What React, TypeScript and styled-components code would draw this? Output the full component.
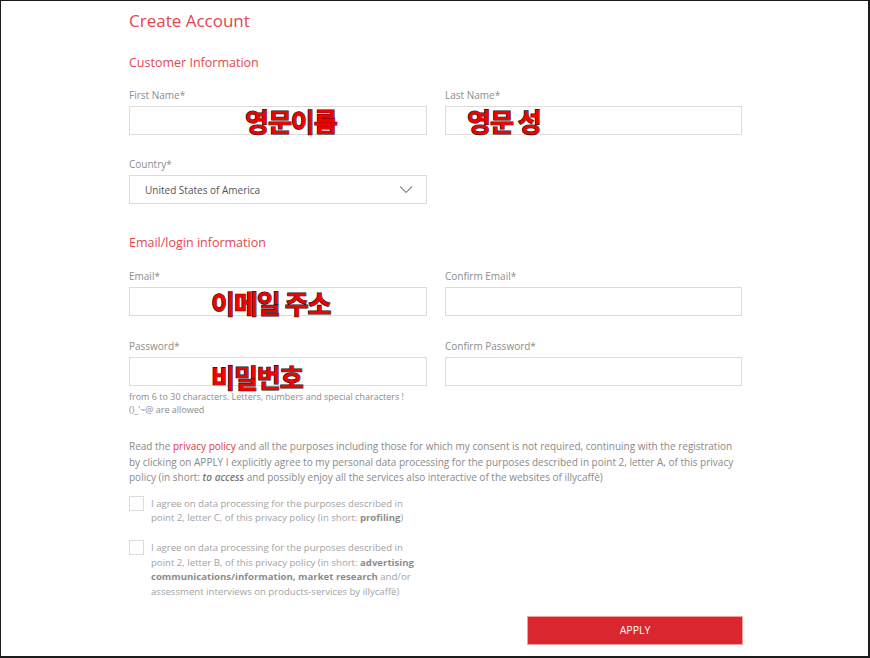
import React from 'react';
import styled, { createGlobalStyle } from 'styled-components';

const GlobalStyle = createGlobalStyle`
  html, body {
    margin: 0;
    padding: 0;
    background: #fff;
  }
  * {
    box-sizing: border-box;
  }
`;

type FieldProps = {
  label: string;
  value?: string;
  select?: boolean;
  note?: string;
  hint?: React.ReactNode;
  noteLeft?: number;
  noteTop?: number;
};

const Field: React.FC<FieldProps> = ({ label, value, select, note, hint, noteLeft = 0, noteTop = 0 }) => {
  return (
    <FieldStyle>
      <Label>{label}</Label>
      <InputWrap>
        <Input>
          {value && <InputValue>{value}</InputValue>}
          {select && (
            <Chevron width="14" height="9" viewBox="0 0 14 9" aria-hidden="true">
              <path d="M1 1.5 L7 7.5 L13 1.5" fill="none" stroke="#8c8c8c" strokeWidth="1.1" />
            </Chevron>
          )}
        </Input>
        {note && (
          <Note $left={noteLeft} $top={noteTop}>
            {note}
          </Note>
        )}
      </InputWrap>
      {hint && <Hint>{hint}</Hint>}
    </FieldStyle>
  );
};

type CheckProps = {
  children: React.ReactNode;
};

const Check: React.FC<CheckProps> = ({ children }) => {
  return (
    <CheckRow>
      <Box />
      <CheckText>{children}</CheckText>
    </CheckRow>
  );
};

const App: React.FC = () => {
  return (
    <Frame>
      <GlobalStyle />
      <Form>
        <Title>Create Account</Title>

        <Section>Customer Information</Section>
        <Grid>
          <Field label="First Name*" note="영문이름" noteLeft={116} noteTop={0} />
          <Field label="Last Name*" note="영문 성" noteLeft={22} noteTop={0} />
          <Field label="Country*" value="United States of America" select />
        </Grid>

        <Section $top={30} $bottom={14}>
          Email/login information
        </Section>
        <Grid $rowGap={20}>
          <Field label="Email*" note="이메일 주소" noteLeft={82} noteTop={1} />
          <Field label="Confirm Email*" />
          <Field
            label="Password*"
            note="비밀번호"
            noteLeft={82}
            noteTop={5}
            hint={
              <>
                from 6 to 30 characters. Letters, numbers and special characters !
                <br />
                ()_'~@ are allowed
              </>
            }
          />
          <Field label="Confirm Password*" />
        </Grid>

        <Privacy>
          Read the <Link>privacy policy</Link> and all the purposes including those for which my consent is
          not required, continuing with the registration by clicking on APPLY I explicitly agree to my personal
          data processing for the purposes described in point 2, letter A, of this privacy policy (in short:{' '}
          <em>to access</em> and possibly enjoy all the services also interactive of the websites of illycaffè)
        </Privacy>

        <Checks>
          <Check>
            I agree on data processing for the purposes described in point 2, letter C, of this privacy policy
            (in short: <b>profiling</b>)
          </Check>
          <Check>
            I agree on data processing for the purposes described in point 2, letter B, of this privacy policy
            (in short: <b>advertising communications/information, market research</b> and/or assessment
            interviews on products-services by illycaffè)
          </Check>
        </Checks>

        <Actions>
          <Apply>APPLY</Apply>
        </Actions>
      </Form>
    </Frame>
  );
};

const Frame = styled.div`
  width: 870px;
  height: 658px;
  overflow: hidden;
  border-style: solid;
  border-color: #1b1b1b;
  border-width: 1px 2px 2px 1px;
  font-family: 'Open Sans', 'Liberation Sans', sans-serif;
`;

const Form = styled.div`
  width: 742px;
  padding: 10px 0 0 128px;
`;

const Title = styled.h1`
  margin: 0;
  font-size: 17px;
  font-weight: 400;
  line-height: 20px;
  color: #e4454f;
`;

const Section = styled.h2<{ $top?: number; $bottom?: number }>`
  margin: ${p => p.$top ?? 23}px 0 ${p => p.$bottom ?? 13}px;
  font-size: 12.5px;
  font-weight: 400;
  line-height: 18px;
  color: #e3474f;
`;

const Grid = styled.div<{ $rowGap?: number }>`
  display: grid;
  grid-template-columns: 298px 297px;
  column-gap: 18px;
  row-gap: ${p => p.$rowGap ?? 19}px;
`;

const FieldStyle = styled.div`
  display: flex;
  flex-direction: column;
`;

const Label = styled.label`
  font-size: 10px;
  line-height: 14px;
  color: #8d8d8d;
  margin-bottom: 4px;
  margin-top: 3px;
`;

const InputWrap = styled.div`
  position: relative;
`;

const Input = styled.div`
  height: 29px;
  border: 1px solid #dedcd8;
  background: #fff;
  display: flex;
  align-items: center;
  justify-content: space-between;
  padding: 0 13px 0 15px;
`;

const InputValue = styled.span`
  font-size: 10px;
  color: #555;
`;

const Chevron = styled.svg`
  display: block;
`;

const Note = styled.span<{ $left: number; $top: number }>`
  position: absolute;
  left: ${p => p.$left}px;
  top: ${p => p.$top}px;
  font-family: 'Noto Sans CJK KR', sans-serif;
  font-size: 26px;
  font-weight: 700;
  line-height: 30px;
  letter-spacing: -1px;
  color: #f20000;
  -webkit-text-stroke: 1.2px #111;
  paint-order: stroke fill;
  white-space: nowrap;
`;

const Hint = styled.div`
  margin-top: 4px;
  font-size: 9px;
  line-height: 13px;
  color: #8d8d8d;
`;

const Privacy = styled.p`
  margin: 23px 0 0;
  font-size: 10px;
  line-height: 15.5px;
  color: #8a8a8a;

  em {
    font-style: italic;
    font-weight: 600;
    color: #777;
  }
`;

const Link = styled.a`
  color: #e0343f;
  text-decoration: none;
`;

const Checks = styled.div`
  margin-top: 11px;
  display: flex;
  flex-direction: column;
  gap: 15px;
`;

const CheckRow = styled.div`
  display: flex;
  gap: 7px;
  align-items: flex-start;
`;

const Box = styled.span`
  flex: none;
  width: 15px;
  height: 15px;
  margin-top: -1px;
  border: 1px solid #dcdcdc;
  background: #fff;
`;

const CheckText = styled.div`
  width: 268px;
  font-size: 9.6px;
  line-height: 14.7px;
  color: #a3a3a3;

  b {
    font-weight: 700;
    color: #8c8c8c;
  }
`;

const Actions = styled.div`
  display: flex;
  justify-content: flex-end;
  margin-top: 16px;
`;

const Apply = styled.button`
  width: 216px;
  height: 29px;
  border: 1px solid #f0a0a5;
  background: #d9262f;
  color: #fff;
  font-family: 'Open Sans', 'Liberation Sans', sans-serif;
  font-size: 10.5px;
  cursor: pointer;
`;

export default App;
